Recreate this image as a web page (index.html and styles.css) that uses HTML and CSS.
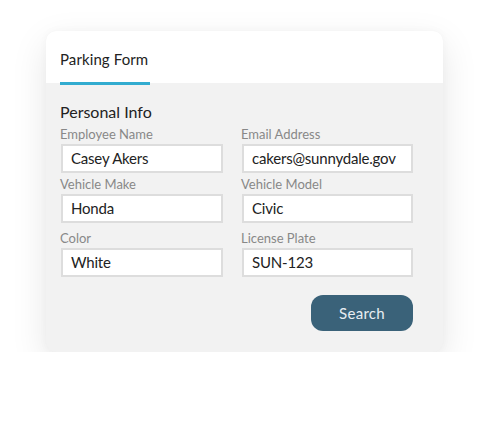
FILE: index.html
```html
<!DOCTYPE html>
<html>
<head>
<meta charset="utf-8">
<link rel="stylesheet" href="styles.css">
</head>
<body>
<div class="card">
  <div class="card-header">
    <div class="tab">Parking Form</div>
  </div>
  <div class="card-body">
    <div class="section-title">Personal Info</div>
    <div class="fields">
      <div class="field">
        <label class="field-label">Employee Name</label>
        <div class="field-input">Casey Akers</div>
      </div>
      <div class="field">
        <label class="field-label">Email Address</label>
        <div class="field-input">cakers@sunnydale.gov</div>
      </div>
      <div class="field">
        <label class="field-label">Vehicle Make</label>
        <div class="field-input">Honda</div>
      </div>
      <div class="field">
        <label class="field-label">Vehicle Model</label>
        <div class="field-input">Civic</div>
      </div>
      <div class="field field-spaced">
        <label class="field-label">Color</label>
        <div class="field-input">White</div>
      </div>
      <div class="field field-spaced">
        <label class="field-label">License Plate</label>
        <div class="field-input">SUN-123</div>
      </div>
    </div>
    <div class="actions">
      <button class="btn-search">Search</button>
    </div>
  </div>
</div>
</body>
</html>
```

FILE: styles.css
```css
* { box-sizing: border-box; }

html, body {
  margin: 0;
  padding: 0;
  background: #ffffff;
  font-family: "Lato", "Noto Sans", sans-serif;
}

body {
  padding: 31px 0 0 46px;
}

.card {
  width: 397px;
  border-radius: 10px;
  overflow: hidden;
  background: #f2f2f2;
  box-shadow: 0 12px 36px rgba(0, 0, 0, 0.1), 0 0 8px rgba(0, 0, 0, 0.03);
}

.card-header {
  height: 52px;
  background: #ffffff;
  display: flex;
  align-items: center;
  padding-left: 14px;
  padding-top: 4px;
}

.tab {
  position: relative;
  width: 90px;
  font-size: 15px;
  color: #222222;
  letter-spacing: 0.1px;
}

.tab::after {
  content: "";
  position: absolute;
  left: 0;
  right: 0;
  bottom: -17px;
  height: 3px;
  background: #32acd0;
}

.card-body {
  padding: 19px 30px 21px 14px;
}

.section-title {
  font-size: 16px;
  line-height: 20px;
  color: #222222;
  margin-bottom: 4px;
}

.fields {
  display: grid;
  grid-template-columns: 163px 172px;
  column-gap: 18px;
  row-gap: 3px;
}

.field-spaced {
  margin-top: 4px;
}

.field-label {
  display: block;
  font-size: 13px;
  line-height: 16px;
  color: #888888;
  margin-bottom: 2px;
}

.field-input {
  height: 29px;
  background: #ffffff;
  border: 2px solid #dddddd;
  padding: 0 0 0 8px;
  font-size: 15px;
  line-height: 25px;
  letter-spacing: -0.2px;
  color: #222222;
  margin-left: 1px;
}

.actions {
  display: flex;
  justify-content: flex-end;
  margin-top: 18px;
}

.btn-search {
  width: 102px;
  height: 36px;
  border: none;
  border-radius: 12px;
  background: #3a6279;
  color: #e8eef2;
  font-family: "Lato", "Noto Sans", sans-serif;
  font-size: 15px;
  letter-spacing: 0.3px;
  cursor: pointer;
}
```
